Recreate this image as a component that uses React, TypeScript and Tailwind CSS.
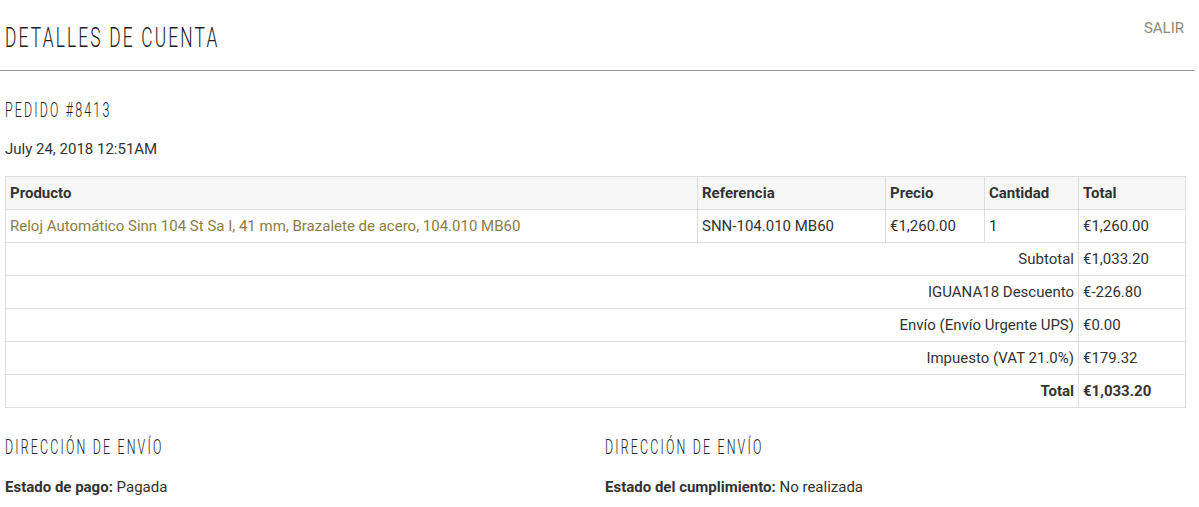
import React from "react";

const head = { fontFamily: 'Roboto, "Liberation Sans", sans-serif' };
const body = { fontFamily: 'Roboto, "Liberation Sans", sans-serif' };

const totals = [
  { label: "Subtotal", value: "€1,033.20" },
  { label: "IGUANA18 Descuento", value: "€-226.80" },
  { label: "Envío (Envío Urgente UPS)", value: "€0.00" },
  { label: "Impuesto (VAT 21.0%)", value: "€179.32" },
];

// condensed light heading (the original uses an Oswald-like face)
function Heading({ children, className }: { children: React.ReactNode; className?: string }) {
  return (
    <span
      className={`inline-block origin-left scale-x-[0.62] font-light tracking-[3.5px] text-[#222] whitespace-nowrap ${className ?? ""}`}
      style={head}
    >
      {children}
    </span>
  );
}

export default function App() {
  return (
    <div className="w-[1199px] h-[507px] bg-white text-[#333] text-[15px]" style={body}>
      {/* Header */}
      <div className="flex items-start justify-between border-b border-[#9a9a9a] w-[1195px] h-[71px]">
        <h1 className="pl-[5px] pt-[23px]">
          <Heading className="text-[28px] leading-[30px]">DETALLES DE CUENTA</Heading>
        </h1>
        <a className="pt-[17px] pr-[11px] text-[15px] text-[#8d8a77]">SALIR</a>
      </div>

      <div className="px-[5px]">
        <h2 className="mt-[27px] leading-[24px]">
          <Heading className="text-[20px] leading-[24px]">PEDIDO #8413</Heading>
        </h2>
        <p className="mt-[15px] leading-[20px]">July 24, 2018 12:51AM</p>

        <table className="mt-[17px] w-[1180px] border-collapse border border-[#dedede] table-fixed">
          <colgroup>
            <col className="w-[692px]" />
            <col className="w-[188px]" />
            <col className="w-[99px]" />
            <col className="w-[94px]" />
            <col className="w-[107px]" />
          </colgroup>
          <thead>
            <tr className="bg-[#f7f7f7] h-[33px]">
              {["Producto", "Referencia", "Precio", "Cantidad", "Total"].map((h) => (
                <th key={h} className="border border-[#dedede] px-[4px] text-left font-bold text-[#333]">
                  {h}
                </th>
              ))}
            </tr>
          </thead>
          <tbody>
            <tr className="h-[33px]">
              <td className="border border-[#dedede] px-[4px] text-[#8a7d48]">
                Reloj Automático Sinn 104 St Sa I, 41 mm, Brazalete de acero, 104.010 MB60
              </td>
              <td className="border border-[#dedede] px-[4px]">SNN-104.010 MB60</td>
              <td className="border border-[#dedede] px-[4px]">€1,260.00</td>
              <td className="border border-[#dedede] px-[4px]">1</td>
              <td className="border border-[#dedede] px-[4px]">€1,260.00</td>
            </tr>
            {totals.map((t) => (
              <tr key={t.label} className="h-[33px]">
                <td colSpan={4} className="border border-[#dedede] px-[4px] text-right">
                  {t.label}
                </td>
                <td className="border border-[#dedede] px-[4px]">{t.value}</td>
              </tr>
            ))}
            <tr className="h-[33px]">
              <td colSpan={4} className="border border-[#dedede] px-[4px] text-right font-bold">
                Total
              </td>
              <td className="border border-[#dedede] px-[4px] font-bold">€1,033.20</td>
            </tr>
          </tbody>
        </table>

        <div className="mt-[27px] grid grid-cols-[600px_1fr]">
          <div>
            <h3 className="leading-[24px]">
              <Heading className="text-[20px] leading-[24px]">DIRECCIÓN DE ENVÍO</Heading>
            </h3>
            <p className="mt-[16px] leading-[20px]">
              <span className="font-bold">Estado de pago:</span> Pagada
            </p>
          </div>
          <div>
            <h3 className="leading-[24px]">
              <Heading className="text-[20px] leading-[24px]">DIRECCIÓN DE ENVÍO</Heading>
            </h3>
            <p className="mt-[16px] leading-[20px]">
              <span className="font-bold">Estado del cumplimiento:</span> No realizada
            </p>
          </div>
        </div>
      </div>
    </div>
  );
}
